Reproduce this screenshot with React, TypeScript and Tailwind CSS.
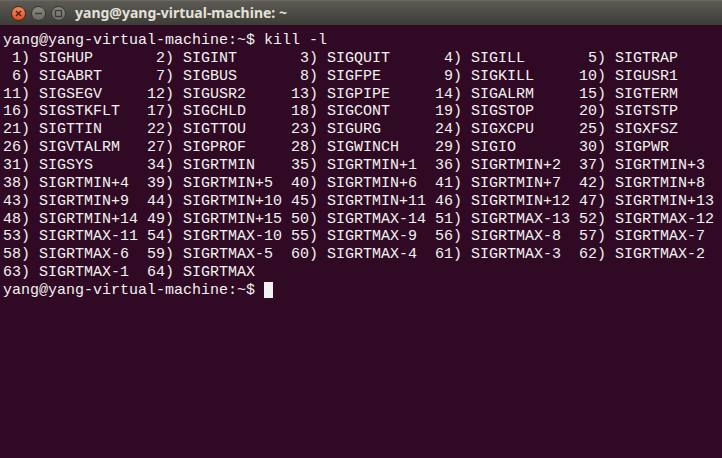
import React from 'react'

const signals = [
  'SIGHUP', 'SIGINT', 'SIGQUIT', 'SIGILL', 'SIGTRAP',
  'SIGABRT', 'SIGBUS', 'SIGFPE', 'SIGKILL', 'SIGUSR1',
  'SIGSEGV', 'SIGUSR2', 'SIGPIPE', 'SIGALRM', 'SIGTERM',
  'SIGSTKFLT', 'SIGCHLD', 'SIGCONT', 'SIGSTOP', 'SIGTSTP',
  'SIGTTIN', 'SIGTTOU', 'SIGURG', 'SIGXCPU', 'SIGXFSZ',
  'SIGVTALRM', 'SIGPROF', 'SIGWINCH', 'SIGIO', 'SIGPWR',
  'SIGSYS',
]

// kill -l output: numbers 1..31 then 34..64
function buildLines() {
  const items: string[] = []
  signals.forEach((s, i) => items.push(`${String(i + 1).padStart(2)}) ${s}`))
  for (let n = 34; n <= 64; n++) {
    let name = ''
    if (n <= 49) name = n === 34 ? 'SIGRTMIN' : `SIGRTMIN+${n - 34}`
    else name = n === 64 ? 'SIGRTMAX' : `SIGRTMAX-${64 - n}`
    items.push(`${n}) ${name}`)
  }
  const lines: string[] = []
  for (let i = 0; i < items.length; i += 5) {
    const row = items.slice(i, i + 5)
    lines.push(row.map((it, j) => (j < row.length - 1 ? it.padEnd(16) : it)).join(''))
  }
  return lines
}

function WinButton({ kind }: { kind: 'close' | 'min' | 'max' }) {
  if (kind === 'close') {
    return (
      <div className="w-[15px] h-[15px] rounded-full bg-gradient-to-b from-[#f7845a] to-[#e4501c] border border-[#3a2a22] flex items-center justify-center">
        <svg width="7" height="7" viewBox="0 0 7 7">
          <path d="M1 1 L6 6 M6 1 L1 6" stroke="#3b2016" strokeWidth="1.3" />
        </svg>
      </div>
    )
  }
  return (
    <div className="w-[15px] h-[15px] rounded-full bg-gradient-to-b from-[#8a8882] to-[#6b6a64] border border-[#36352f] flex items-center justify-center">
      <svg width="9" height="9" viewBox="0 0 9 9">
        {kind === 'min' ? (
          <path d="M1 4.5 H8" stroke="#3a3934" strokeWidth="1.3" />
        ) : (
          <rect x="1.5" y="1.5" width="6" height="6" fill="none" stroke="#3a3934" strokeWidth="1.2" />
        )}
      </svg>
    </div>
  )
}

export default function App() {
  const lines = buildLines()

  return (
    <div className="w-[722px] h-[458px] bg-[#300a24] flex flex-col overflow-hidden">
      <div className="h-[25px] shrink-0 bg-gradient-to-b from-[#5d5b54] to-[#3d3c37] flex items-center pl-[11px] border-t border-[#6a6861]">
        <div className="flex items-center gap-[5px]">
          <WinButton kind="close" />
          <WinButton kind="min" />
          <WinButton kind="max" />
        </div>
        <span className="ml-[9px] text-[14px] font-bold text-[#e4e1da] font-['Noto_Sans',sans-serif] leading-none">
          yang@yang-virtual-machine: ~
        </span>
      </div>
      <pre className="pl-[3px] pt-[7px] text-[15px] leading-[17.86px] text-[#f2f2f0] font-['Liberation_Mono',monospace] whitespace-pre">
        <div>yang@yang-virtual-machine:~$ kill -l</div>
        {lines.map((l, i) => (
          <div key={i}>{l}</div>
        ))}
        <div>
          yang@yang-virtual-machine:~$ <span className="inline-block w-[9px] h-[16px] bg-[#f2f2f0] align-[-4px]" />
        </div>
      </pre>
    </div>
  )
}
